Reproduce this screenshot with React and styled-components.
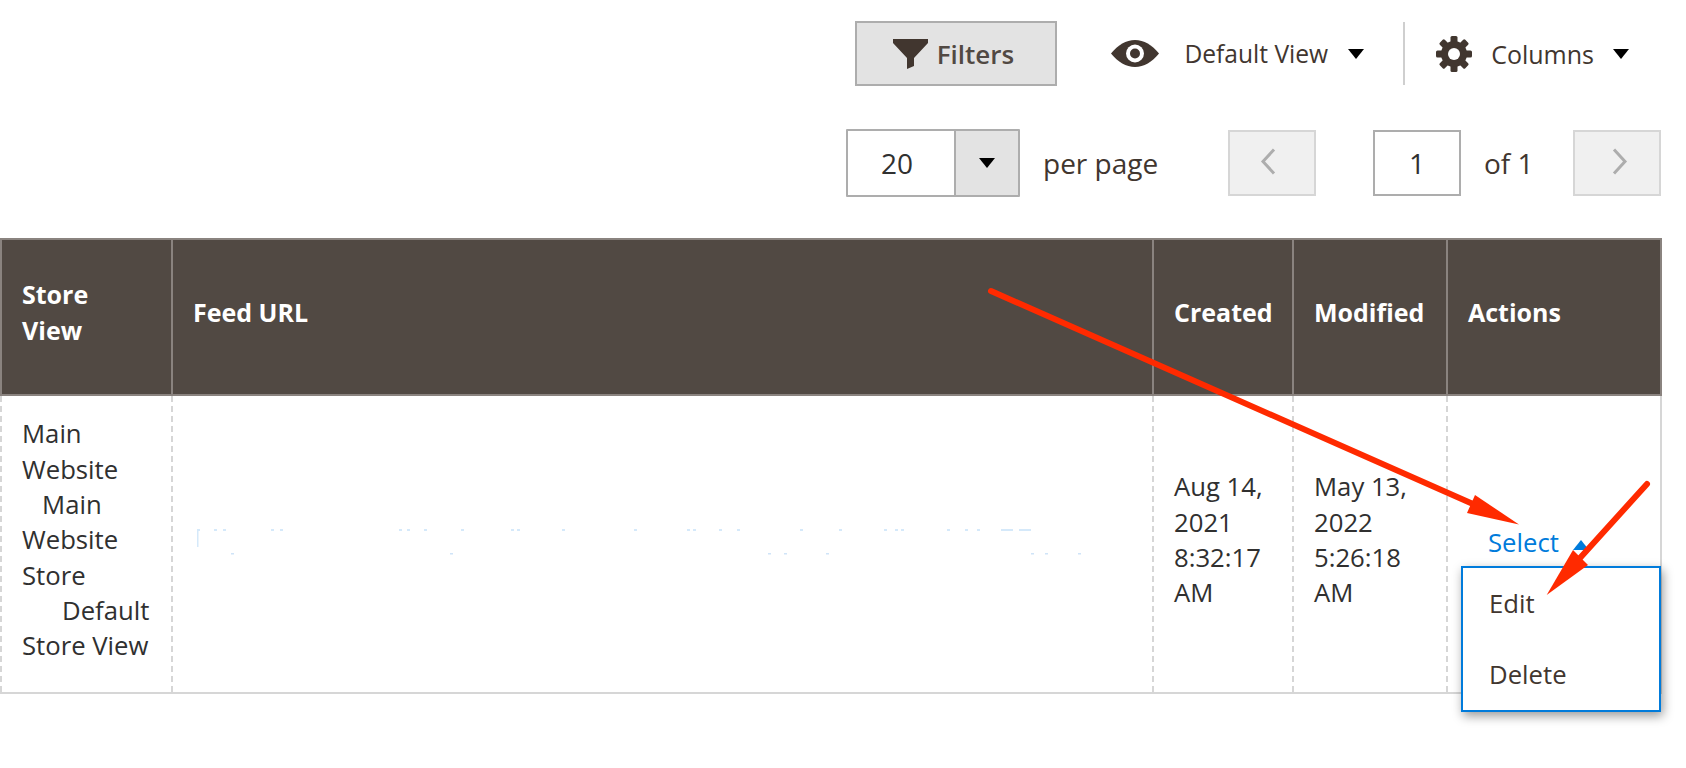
import styled, { createGlobalStyle } from 'styled-components'

const GlobalStyle = createGlobalStyle`
  html, body {
    margin: 0;
    background: #fff;
    font-family: "Open Sans", "Liberation Sans", sans-serif;
    color: #41362f;
  }
`

// faint leftovers of the blurred feed url
const SPECKS_TOP = [196, 213, 222, 270, 279, 398, 406, 423, 460, 510, 516, 561, 633, 686, 692, 718, 736, 799, 838, 883, 894, 900, 946, 964, 976]
const SPECKS_WIDE = [1000, 1018]
const SPECKS_BOTTOM = [230, 449, 767, 783, 825, 1030, 1044, 1077]

function FunnelIcon() {
  return (
    <svg width="35" height="30" viewBox="0 0 35 30">
      <path d="M0 0H35V4L21 19V27L14 30V19L0 4Z" fill="#41362f" />
    </svg>
  )
}

function EyeIcon() {
  return (
    <svg width="48" height="27" viewBox="0 0 48 27">
      <path d="M0 13.5C7 5 15 0 24 0S41 5 48 13.5C41 22 33 27 24 27S7 22 0 13.5Z" fill="#41362f" />
      <circle cx="24" cy="13.5" r="9" fill="#fff" />
      <circle cx="24" cy="13.5" r="5" fill="#41362f" />
    </svg>
  )
}

function GearIcon() {
  return (
    <svg width="36" height="36" viewBox="0 0 36 36">
      {[0, 45, 90, 135, 180, 225, 270, 315].map((deg) => (
        <rect key={deg} x="14.5" y="0" width="7" height="10" rx="1.5" fill="#41362f" transform={`rotate(${deg} 18 18)`} />
      ))}
      <circle cx="18" cy="18" r="13" fill="#41362f" />
      <circle cx="18" cy="18" r="6" fill="#fff" />
    </svg>
  )
}

function Chevron({ left }) {
  return (
    <svg width="16" height="27" viewBox="0 0 16 27">
      <path d={left ? 'M14 1.5L3 13.5L14 25.5' : 'M2 1.5L13 13.5L2 25.5'} fill="none" stroke="#adadad" strokeWidth="3" />
    </svg>
  )
}

export default function App() {
  return (
    <Page>
      <GlobalStyle />
      <TopBar>
        <FilterButton>
          <FunnelIcon />
          Filters
        </FilterButton>
        <ViewSwitch>
          <EyeIcon />
          <ViewLabel>Default View</ViewLabel>
          <Caret />
        </ViewSwitch>
        <BarDivider />
        <ColumnSwitch>
          <GearIcon />
          <BarLabel>Columns</BarLabel>
          <Caret />
        </ColumnSwitch>
      </TopBar>

      <PagerBar>
        <PageSize>
          <PageSizeValue>20</PageSizeValue>
          <PageSizeToggle>
            <Caret />
          </PageSizeToggle>
        </PageSize>
        <PerPage>per page</PerPage>
        <PageArrow $prev>
          <Chevron left />
        </PageArrow>
        <PageInput>1</PageInput>
        <PageCount>of 1</PageCount>
        <PageArrow>
          <Chevron />
        </PageArrow>
      </PagerBar>

      <Grid>
        <colgroup>
          <col style={{ width: 171 }} />
          <col style={{ width: 981 }} />
          <col style={{ width: 140 }} />
          <col style={{ width: 154 }} />
          <col style={{ width: 214 }} />
        </colgroup>
        <thead>
          <tr>
            <HeadCell>Store View</HeadCell>
            <HeadCell>Feed URL</HeadCell>
            <HeadCell>Created</HeadCell>
            <HeadCell>Modified</HeadCell>
            <HeadCell>Actions</HeadCell>
          </tr>
        </thead>
        <tbody>
          <tr>
            <BodyCell>
              Main Website
              <br />
              {'\u00a0\u00a0\u00a0'}Main Website Store
              <br />
              {'\u00a0\u00a0\u00a0\u00a0\u00a0\u00a0'}Default Store View
            </BodyCell>
            <BodyCell>
              <BlurredUrl width="981" height="40" viewBox="172 520 981 40">
                <rect x="196" y="529" width="1.5" height="18" fill="#d5e9fa" />
                {SPECKS_TOP.map((x) => (
                  <rect key={x} x={x} y="529" width="3" height="2" fill="#d5e9fa" />
                ))}
                {SPECKS_WIDE.map((x) => (
                  <rect key={x} x={x} y="529" width="12" height="2" fill="#d5e9fa" />
                ))}
                {SPECKS_BOTTOM.map((x) => (
                  <rect key={x} x={x} y="553" width="3" height="1.5" fill="#cfe4f8" />
                ))}
              </BlurredUrl>
            </BodyCell>
            <BodyCell>Aug 14, 2021 8:32:17 AM</BodyCell>
            <BodyCell>May 13, 2022 5:26:18 AM</BodyCell>
            <ActionCell>
              <ActionSelect>
                Select
                <CaretUp />
                <ActionMenu>
                  <ActionItem>Edit</ActionItem>
                  <ActionItem>Delete</ActionItem>
                </ActionMenu>
              </ActionSelect>
            </ActionCell>
          </tr>
        </tbody>
      </Grid>

      <Annotations width="1686" height="768" viewBox="0 0 1686 768">
        <line x1="991" y1="291" x2="1473" y2="504" stroke="#ff2a00" strokeWidth="6" strokeLinecap="round" />
        <polygon points="1519,524.5 1475,495 1467,513" fill="#ff2a00" />
        <line x1="1647" y1="484" x2="1580" y2="558" stroke="#ff2a00" strokeWidth="6" strokeLinecap="round" />
        <polygon points="1546.7,595 1573,550 1588,565" fill="#ff2a00" />
      </Annotations>
    </Page>
  )
}

// STYLES
const Page = styled.div`
  position: relative;
  width: 1686px;
  height: 768px;
  overflow: hidden;
  padding-top: 21px;
  box-sizing: border-box;
  font-size: 25px;
`

const TopBar = styled.div`
  display: flex;
  justify-content: flex-end;
  align-items: center;
  height: 65px;
  padding-right: 57px;
`

const FilterButton = styled.button`
  display: flex;
  align-items: center;
  justify-content: center;
  gap: 9px;
  width: 202px;
  height: 65px;
  margin-right: 54px;
  padding: 0 6px 0 0;
  background: #e3e3e3;
  border: 2px solid #adadad;
  color: #514943;
  font: 600 26px "Open Sans", sans-serif;
`

const ViewSwitch = styled.div`
  display: flex;
  align-items: center;
  gap: 25px;
  font-size: 24.6px;
`

const ColumnSwitch = styled.div`
  display: flex;
  align-items: center;
  gap: 19px;
`

const BarLabel = styled.span`
  white-space: nowrap;
`

const ViewLabel = styled(BarLabel)`
  margin-right: -5px;
`

const BarDivider = styled.div`
  width: 2px;
  height: 63px;
  margin: 0 31px 0 39px;
  background: #cfcfcf;
`

const Caret = styled.span`
  display: block;
  width: 0;
  height: 0;
  border-left: 8px solid transparent;
  border-right: 8px solid transparent;
  border-top: 10px solid #000;
`

const PagerBar = styled.div`
  display: flex;
  justify-content: flex-end;
  align-items: center;
  height: 68px;
  margin-top: 43px;
  padding-right: 25px;
  font-size: 28px;
`

const PageSize = styled.div`
  display: flex;
  width: 174px;
  height: 68px;
  box-sizing: border-box;
  border: 2px solid #adadad;
  border-radius: 1px;
  margin-right: 23px;
`

const PageSizeValue = styled.div`
  flex: 1;
  display: flex;
  align-items: center;
  justify-content: center;
  padding-right: 8px;
  color: #303030;
`

const PageSizeToggle = styled.div`
  display: flex;
  align-items: center;
  justify-content: center;
  width: 62px;
  background: #e3e3e3;
  border-left: 2px solid #adadad;
`

const PerPage = styled.span`
  width: 185px;
  white-space: nowrap;
`

const PageArrow = styled.div`
  display: flex;
  align-items: center;
  justify-content: center;
  width: 88px;
  height: 66px;
  box-sizing: border-box;
  padding: 0 ${(p) => (p.$prev ? '8px' : '0')} 4px ${(p) => (p.$prev ? '0' : '6px')};
  background: #f0f0f0;
  border: 2px solid #d6d6d6;
`

const PageInput = styled.div`
  display: flex;
  align-items: center;
  justify-content: center;
  width: 88px;
  height: 66px;
  box-sizing: border-box;
  margin-left: 57px;
  border: 2px solid #adadad;
  color: #303030;
`

const PageCount = styled.span`
  width: 112px;
  padding-left: 23px;
  box-sizing: border-box;
  white-space: nowrap;
`

const Grid = styled.table`
  width: 1660px;
  margin-top: 41px;
  table-layout: fixed;
  border-collapse: collapse;
`

const HeadCell = styled.th`
  height: 156px;
  box-sizing: border-box;
  padding: 0 20px 9px;
  background: #514943;
  border: 2px solid #8a837f;
  color: #fff;
  font-weight: 700;
  font-size: 25px;
  line-height: 35.5px;
  text-align: left;
`

const BodyCell = styled.td`
  height: 298px;
  box-sizing: border-box;
  padding: 0 20px 8px;
  border-left: 2px dashed #d6d6d6;
  border-right: 2px dashed #d6d6d6;
  border-bottom: 2px solid #d6d6d6;
  color: #303030;
  font-size: 25.7px;
  line-height: 35.3px;
  vertical-align: middle;
`

const ActionCell = styled(BodyCell)`
  padding: 0 0 2px 13px;
  border-right: 2px solid #d6d6d6;
`

const BlurredUrl = styled.svg`
  display: block;
  margin-left: -20px;
`

const ActionSelect = styled.div`
  position: relative;
  padding-left: 27px;
  color: #007bdb;
  white-space: nowrap;
`

const CaretUp = styled.span`
  display: inline-block;
  width: 0;
  height: 0;
  margin-left: 14px;
  vertical-align: 2px;
  border-left: 8px solid transparent;
  border-right: 8px solid transparent;
  border-bottom: 10px solid #007bdb;
`

const ActionMenu = styled.ul`
  position: absolute;
  left: 0;
  top: 41px;
  width: 200px;
  height: 146px;
  box-sizing: border-box;
  margin: 0;
  padding: 0;
  list-style: none;
  background: #fff;
  border: 2px solid #007bdb;
  box-shadow: 2px 4px 10px rgba(0, 0, 0, 0.4);
`

const ActionItem = styled.li`
  height: 71px;
  display: flex;
  align-items: center;
  padding-left: 26px;
  color: #41362f;
`

const Annotations = styled.svg`
  position: absolute;
  left: 0;
  top: 0;
  pointer-events: none;
`
